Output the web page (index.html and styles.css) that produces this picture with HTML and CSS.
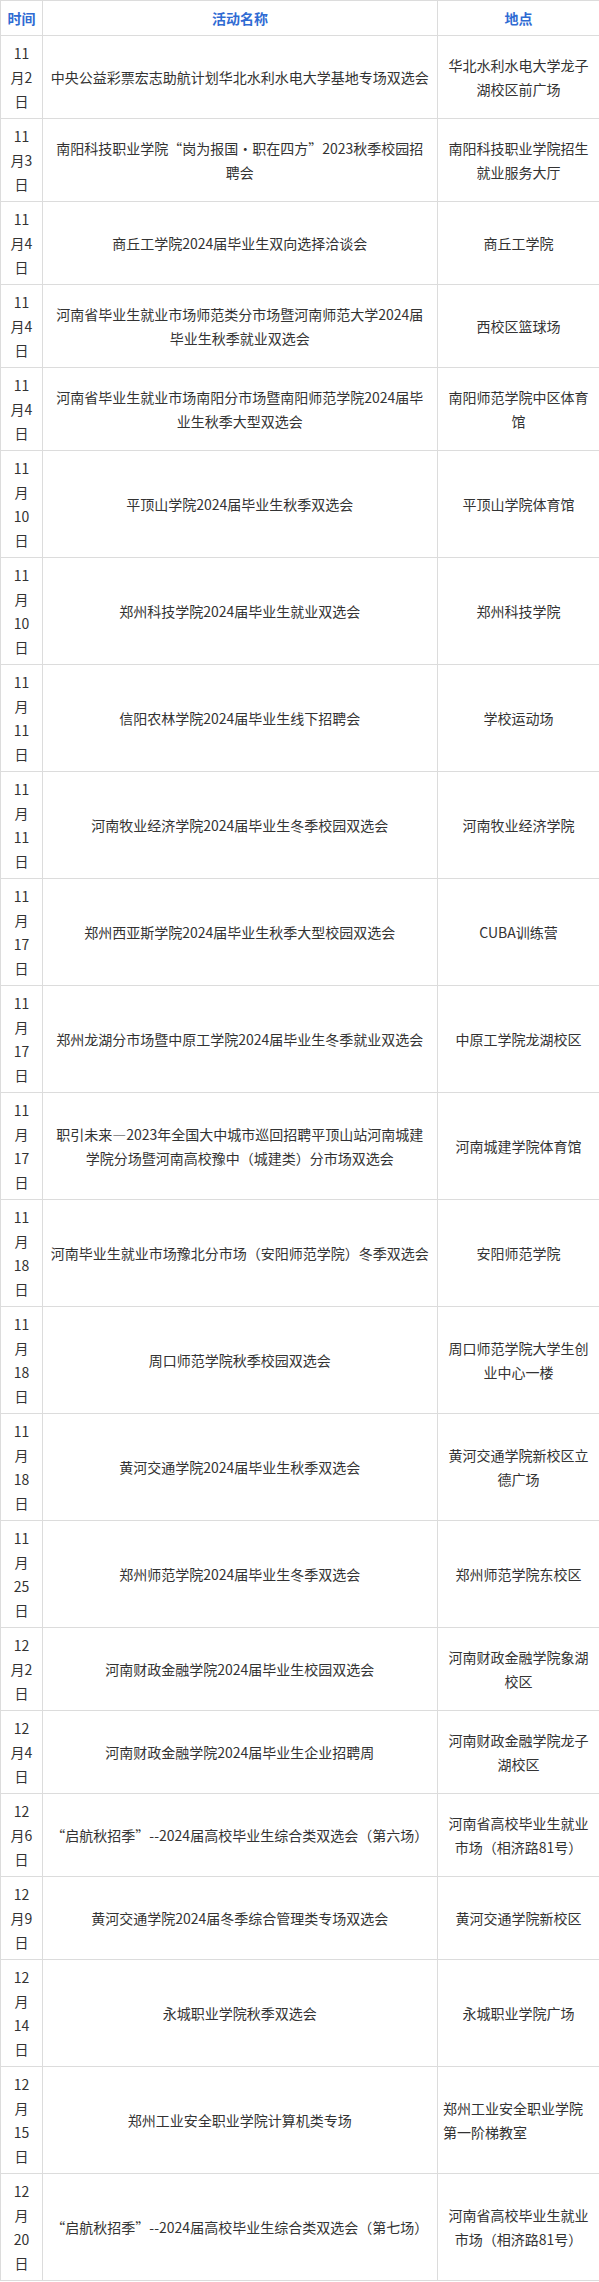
FILE: index.html
```html
<!DOCTYPE html>
<html lang="zh-CN">
<head>
<meta charset="utf-8">
<title>双选会</title>
<link rel="stylesheet" href="styles.css">
</head>
<body>
<table class="fairs">
  <colgroup>
    <col class="c-time">
    <col class="c-name">
    <col class="c-place">
  </colgroup>
  <thead>
    <tr><th>时间</th><th>活动名称</th><th>地点</th></tr>
  </thead>
  <tbody>
    <tr><td>11月2日</td><td>中央公益彩票宏志助航计划华北水利水电大学基地专场双选会</td><td>华北水利水电大学龙子湖校区前广场</td></tr>
    <tr><td>11月3日</td><td>南阳科技职业学院“岗为报国·职在四方”2023秋季校园招聘会</td><td>南阳科技职业学院招生就业服务大厅</td></tr>
    <tr><td>11月4日</td><td>商丘工学院2024届毕业生双向选择洽谈会</td><td>商丘工学院</td></tr>
    <tr><td>11月4日</td><td>河南省毕业生就业市场师范类分市场暨河南师范大学2024届毕业生秋季就业双选会</td><td>西校区篮球场</td></tr>
    <tr><td>11月4日</td><td>河南省毕业生就业市场南阳分市场暨南阳师范学院2024届毕业生秋季大型双选会</td><td>南阳师范学院中区体育馆</td></tr>
    <tr><td>11月10日</td><td>平顶山学院2024届毕业生秋季双选会</td><td>平顶山学院体育馆</td></tr>
    <tr><td>11月10日</td><td>郑州科技学院2024届毕业生就业双选会</td><td>郑州科技学院</td></tr>
    <tr><td>11月11日</td><td>信阳农林学院2024届毕业生线下招聘会</td><td>学校运动场</td></tr>
    <tr><td>11月11日</td><td>河南牧业经济学院2024届毕业生冬季校园双选会</td><td>河南牧业经济学院</td></tr>
    <tr><td>11月17日</td><td>郑州西亚斯学院2024届毕业生秋季大型校园双选会</td><td>CUBA训练营</td></tr>
    <tr><td>11月17日</td><td>郑州龙湖分市场暨中原工学院2024届毕业生冬季就业双选会</td><td>中原工学院龙湖校区</td></tr>
    <tr><td>11月17日</td><td>职引未来—2023年全国大中城市巡回招聘平顶山站河南城建学院分场暨河南高校豫中（城建类）分市场双选会</td><td>河南城建学院体育馆</td></tr>
    <tr><td>11月18日</td><td>河南毕业生就业市场豫北分市场（安阳师范学院）冬季双选会</td><td>安阳师范学院</td></tr>
    <tr><td>11月18日</td><td>周口师范学院秋季校园双选会</td><td>周口师范学院大学生创业中心一楼</td></tr>
    <tr><td>11月18日</td><td>黄河交通学院2024届毕业生秋季双选会</td><td>黄河交通学院新校区立德广场</td></tr>
    <tr><td>11月25日</td><td>郑州师范学院2024届毕业生冬季双选会</td><td>郑州师范学院东校区</td></tr>
    <tr><td>12月2日</td><td>河南财政金融学院2024届毕业生校园双选会</td><td>河南财政金融学院象湖校区</td></tr>
    <tr><td>12月4日</td><td>河南财政金融学院2024届毕业生企业招聘周</td><td>河南财政金融学院龙子湖校区</td></tr>
    <tr><td>12月6日</td><td>“启航秋招季”--2024届高校毕业生综合类双选会（第六场）</td><td>河南省高校毕业生就业市场（相济路81号）</td></tr>
    <tr><td>12月9日</td><td>黄河交通学院2024届冬季综合管理类专场双选会</td><td>黄河交通学院新校区</td></tr>
    <tr><td>12月14日</td><td>永城职业学院秋季双选会</td><td>永城职业学院广场</td></tr>
    <tr><td>12月15日</td><td>郑州工业安全职业学院计算机类专场</td><td class="left">郑州工业安全职业学院第一阶梯教室</td></tr>
    <tr><td>12月20日</td><td>“启航秋招季”--2024届高校毕业生综合类双选会（第七场）</td><td>河南省高校毕业生就业市场（相济路81号）</td></tr>
  </tbody>
</table>
</body>
</html>
```

FILE: styles.css
```css
html, body {
  margin: 0;
  padding: 0;
  background: #fff;
}

body {
  font-family: "Noto Sans CJK SC", "Microsoft YaHei", sans-serif;
  font-size: 14px;
  line-height: 24px;
  color: #333;
}

.fairs {
  width: 599px;
  table-layout: fixed;
  border-collapse: collapse;
}

.c-time { width: 42px; }
.c-name { width: 395px; }
.c-place { width: 162px; }

.fairs th,
.fairs td {
  border: 1px solid #dcdcdc;
  padding: 5px;
  text-align: center;
  vertical-align: middle;
  word-break: normal;
}

.fairs th {
  color: #2f6bd3;
  font-weight: bold;
}

.fairs td:first-child {
  padding-left: 8px;
  padding-right: 8px;
}

.fairs td:nth-child(2) {
  padding-left: 7px;
  padding-right: 7.5px;
}

.fairs td.left {
  text-align: left;
}
```
